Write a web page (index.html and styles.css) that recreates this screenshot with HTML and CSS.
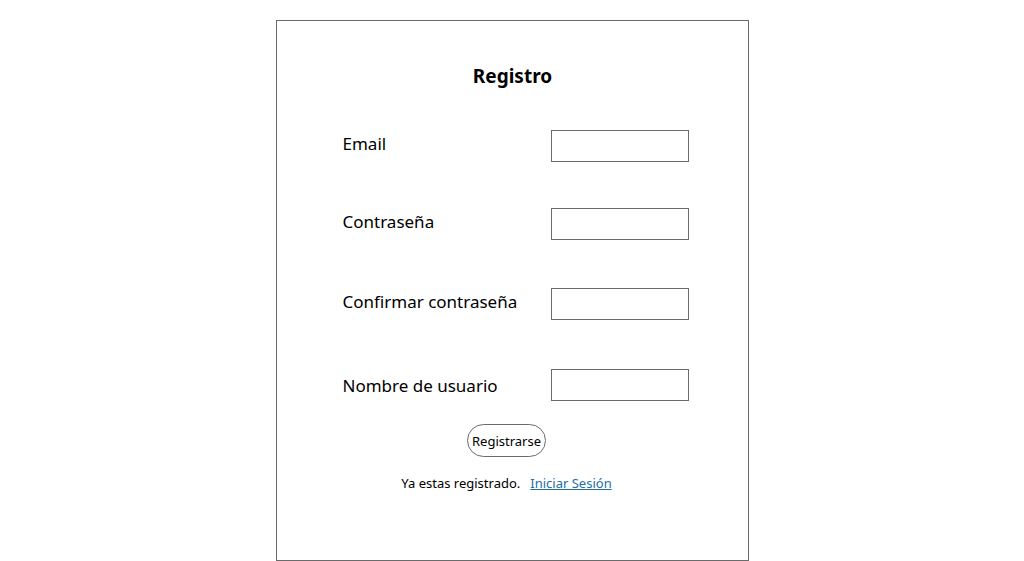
FILE: index.html
```html
<!DOCTYPE html>
<html lang="es">
<head>
<meta charset="utf-8">
<title>Registro</title>
<link rel="stylesheet" href="styles.css">
</head>
<body>
<main class="card">
  <h1 class="title">Registro</h1>
  <form class="form">
    <div class="row">
      <label class="label" for="email">Email</label>
      <input class="field" id="email" type="text">
    </div>
    <div class="row">
      <label class="label" for="pass">Contraseña</label>
      <input class="field" id="pass" type="password">
    </div>
    <div class="row row-wide">
      <label class="label" for="pass2">Confirmar contraseña</label>
      <input class="field" id="pass2" type="password">
    </div>
    <div class="row row-wider">
      <label class="label label-low" for="user">Nombre de usuario</label>
      <input class="field" id="user" type="text">
    </div>
    <div class="actions">
      <button class="btn" type="button">Registrarse</button>
    </div>
  </form>
  <p class="footer">Ya estas registrado.<a class="link" href="#">Iniciar Sesión</a></p>
</main>
</body>
</html>
```

FILE: styles.css
```css
* { box-sizing: border-box; }
html, body { margin: 0; padding: 0; background: #fff; }
body {
  font-family: "Noto Sans", "Open Sans", sans-serif;
  color: #000;
}
.card {
  width: 473px;
  height: 541px;
  margin: 20px auto 0;
  border: 1px solid #6b6b6b;
  padding: 0 59px 0 66px;
}
.title {
  margin: 41px 0 0;
  text-align: center;
  font-size: 19px;
  font-weight: 700;
  line-height: 28px;
  padding-right: 6px;
}
.form {
  margin-top: 40px;
  display: flex;
  flex-direction: column;
  gap: 46px;
}
.row {
  display: flex;
  align-items: center;
  justify-content: space-between;
  height: 32px;
}
.row-wide { margin-top: 2px; }
.row-wider { margin-top: 3px; }
.label {
  font-size: 17px;
  line-height: 24px;
  margin-top: -5px;
}
.label-low { margin-top: 2px; }
.field {
  width: 138px;
  height: 32px;
  border: 1px solid #6b6b6b;
  border-radius: 0;
  margin: 0;
  padding: 0 6px;
  font: inherit;
}
.actions {
  margin-top: -23px;
  display: flex;
  justify-content: center;
  padding-right: 18px;
}
.btn {
  height: 33px;
  padding: 0 4px;
  border: 1px solid #6b6b6b;
  border-radius: 17px;
  background: #fff;
  font-family: inherit;
  font-size: 13px;
  color: #000;
}
.footer {
  margin: 16px 0 0;
  text-align: center;
  font-size: 13px;
  line-height: 20px;
  padding-right: 18px;
}
.link {
  margin-left: 10px;
  color: #1f6ea6;
  text-decoration: underline;
}
```
